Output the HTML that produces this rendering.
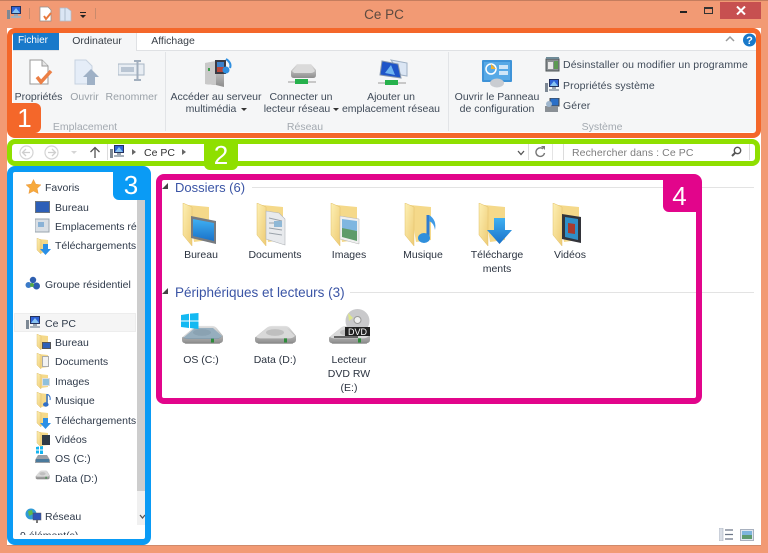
<!DOCTYPE html>
<html lang="fr"><head><meta charset="utf-8"><title>Ce PC</title>
<style>
html,body{margin:0;padding:0;background:#f29a74}
#p{position:relative;width:768px;height:553px;overflow:hidden;background:#f29a74;font-family:"Liberation Sans",sans-serif;font-size:10.5px;color:#333;filter:blur(.3px)}
#p div,#p svg{position:absolute}
.t{white-space:nowrap;line-height:14px;height:14px;margin-top:1px}
.c{transform:translateX(-50%);text-align:center}
.r{color:#3f4a58}
.g{color:#a3a9b0}
.l{color:#9aa1a8}
.s{color:#2f3a4a;font-size:10.5px}
.m{color:#2b3340;font-size:10.5px}
.h{color:#3a54a5;font-size:13.5px;line-height:16px;height:16px}
.f{border-style:solid;box-sizing:border-box;background:transparent}
.b{color:#fff;font-size:26px;line-height:30px;text-align:center}
</style></head><body>
<div id="p">
<svg width="0" height="0" style="position:absolute"><defs>
<linearGradient id="fg" x1="0" y1="0" x2="1" y2="1"><stop offset="0" stop-color="#fdf0b4"/><stop offset="1" stop-color="#eecb74"/></linearGradient>
<linearGradient id="dg" x1="0" y1="0" x2="0" y2="1"><stop offset="0" stop-color="#e3e3e3"/><stop offset="1" stop-color="#8d8d8d"/></linearGradient>
<linearGradient id="bg" x1="0" y1="0" x2="0" y2="1"><stop offset="0" stop-color="#3fb0f2"/><stop offset="1" stop-color="#1a72c9"/></linearGradient>
<symbol id="fold" viewBox="0 0 36 44"><path d="M6 2 27 4V37L12 39Z" fill="#f5d98a"/><path d="M1 0 10 4V43L1 32Z" fill="url(#fg)" stroke="#e2c06a" stroke-width=".5"/></symbol>
<symbol id="sf" viewBox="0 0 14 16"><path d="M3 1 12 2V14L5 15Z" fill="#f5d98a"/><path d="M1 0 5 2V16L1 12Z" fill="url(#fg)" stroke="#d9b65f" stroke-width=".4"/></symbol>
<symbol id="pc" viewBox="0 0 15 14"><rect x="4" y="0" width="10" height="8" fill="#24325e"/><rect x="5" y="1" width="8" height="6" fill="#2f62d6"/><path d="M5 7 9 2l4 5Z" fill="#88c4f2"/><rect x="7" y="8" width="4" height="2" fill="#9aa5b0"/><rect x="4" y="10" width="10" height="2" fill="#a7b0ba"/><rect x="0" y="4" width="3" height="9" fill="#7d8894"/></symbol>
<symbol id="hdd" viewBox="0 0 44 24" preserveAspectRatio="none"><path d="M2 15 14 3Q16 1 20 1H32Q35 1 37 4L43 13V18Q43 22 38 22H6Q2 22 2 18Z" fill="url(#dg)"/><path d="M3 14 15 3H33L42 13Q40 16 36 16H7Q4 16 3 14Z" fill="#d9d9d9"/><ellipse cx="22" cy="9" rx="9" ry="4" fill="#bfbfbf"/><rect x="31" y="16" width="3" height="5" fill="#2e8b3a"/><path d="M5 22H40" stroke="#555" stroke-width="1" opacity=".5"/></symbol>
</defs></svg>

<!-- title bar -->
<div style="left:0;top:0;width:768px;height:1px;background:#c57d5e"></div>
<svg style="left:7px;top:6px" width="15" height="14"><use href="#pc"/></svg>
<div style="left:29px;top:8px;width:1px;height:11px;background:#c98a6c"></div>
<svg style="left:38px;top:6px" width="16" height="16" viewBox="0 0 16 16"><path d="M2 1H10L13 4V15H2Z" fill="#fff" stroke="#8d8d8d" stroke-width=".7"/><path d="M6 10l2 3 5-6" fill="none" stroke="#e8783c" stroke-width="2"/></svg>
<svg style="left:59px;top:7px" width="13" height="15" viewBox="0 0 13 15"><path d="M1 1H8L12 4V14H1Z" fill="#dbe6f4" stroke="#aebccb" stroke-width=".7"/><path d="M6 1V14" stroke="#aebccb"/></svg>
<svg style="left:79px;top:12px" width="8" height="7" viewBox="0 0 8 7"><path d="M1 0H7V1H1ZM1 3H7L4 6Z" fill="#222"/></svg>
<div style="left:95px;top:8px;width:1px;height:11px;background:#c98a6c"></div>
<div class="t c" style="left:384px;top:6px;font-size:13.5px;line-height:16px;height:16px;color:#5c4a40">Ce PC</div>
<div style="left:680px;top:11px;width:7px;height:2px;background:#222"></div>
<div style="left:704px;top:7px;width:9px;height:7px;border:1px solid #333;border-top-width:2px;box-sizing:border-box"></div>
<div style="left:720px;top:2px;width:41px;height:17px;background:#c75050"></div>
<svg style="left:736px;top:6px" width="10" height="9" viewBox="0 0 10 9"><path d="M1 .5 9 8.5M9 .5 1 8.5" stroke="#fff" stroke-width="2"/></svg>

<!-- window -->
<div style="left:7px;top:28px;width:754px;height:517px;background:#fff"></div>
<div style="left:7px;top:545px;width:754px;height:1px;background:#d08a6b"></div>

<!-- ribbon -->
<div style="left:13px;top:51px;width:743px;height:81px;background:#f5f6f7"></div>
<div style="left:13px;top:50px;width:743px;height:1px;background:#dfe1e4"></div>
<div style="left:13px;top:33px;width:46px;height:17px;background:#1979ca"></div>
<div class="t c" style="left:33px;top:33px;color:#fff;font-size:10px">Fichier</div>
<div style="left:59px;top:33px;width:78px;height:18px;background:#f5f6f7;border-right:1px solid #dfe1e4;box-sizing:border-box"></div>
<div class="t c" style="left:97px;top:33px;color:#3a4048">Ordinateur</div>
<div class="t c" style="left:173px;top:33px;color:#3a4048">Affichage</div>
<svg style="left:725px;top:35px" width="10" height="7" viewBox="0 0 10 7"><path d="M1 6 5 2l4 4" fill="none" stroke="#9a9a9a" stroke-width="1.500"/></svg>
<svg style="left:743px;top:33px" width="13" height="14" viewBox="0 0 13 14"><circle cx="6.500" cy="7" r="6.500" fill="#1979ca"/><text x="6.500" y="11" font-size="11" font-weight="bold" text-anchor="middle" fill="#fff" font-family="Liberation Sans">?</text></svg>
<div style="left:165px;top:52px;width:1px;height:79px;background:#e2e4e7"></div>
<div style="left:448px;top:52px;width:1px;height:79px;background:#e2e4e7"></div>

<svg style="left:28px;top:59px" width="25" height="27" viewBox="0 0 25 27"><path d="M2 1H14L20 7V25H2Z" fill="#fff" stroke="#9a9a9a"/><path d="M14 1V7H20" fill="#e6e6e6" stroke="#9a9a9a"/><path d="M9 18l4 5 10-11" fill="none" stroke="#ec7f45" stroke-width="3.500"/></svg>
<svg style="left:73px;top:59px" width="27" height="27" viewBox="0 0 27 27"><path d="M2 1H13L19 7V25H2Z" fill="#e5edf8" stroke="#c7d2e0"/><path d="M18 10l8 8h-4v8h-8v-8h-4Z" fill="#9fb1c6"/></svg>
<svg style="left:118px;top:60px" width="28" height="21" viewBox="0 0 28 21"><rect x="0" y="4" width="26" height="11" fill="#e8edf3" stroke="#a9b6c6"/><rect x="3" y="7" width="13" height="5" fill="#b9c5d3"/><path d="M16 1h7M19.500 1v19M16 20h7" stroke="#a2afbe" stroke-width="2" fill="none"/></svg>
<div class="t c r" style="left:38.500px;top:89px">Propriétés</div>
<div class="t c l" style="left:84.500px;top:89px">Ouvrir</div>
<div class="t c l" style="left:131.500px;top:89px">Renommer</div>
<div class="t c g" style="left:85px;top:119px">Emplacement</div>

<svg style="left:204px;top:57px" width="30" height="31" viewBox="0 0 30 31"><path d="M1 6 12 4 20 6V30L12 28 1 27Z" fill="url(#dg)"/><path d="M1 6 12 4V28L1 27Z" fill="#c9c9c9"/><rect x="4" y="11" width="2" height="3" fill="#3d9e4a"/><rect x="11" y="3" width="11" height="14" fill="#3a3a44"/><rect x="13" y="5" width="7" height="5" fill="#3b7fca"/><rect x="13" y="10" width="7" height="5" fill="#b8463a"/><path d="M22 2q6 4 4 9" stroke="#2f8fe0" stroke-width="2" fill="none"/><circle cx="22" cy="13" r="3.500" fill="#2f8fe0"/></svg>
<svg style="left:287px;top:63px" width="30" height="24" viewBox="0 0 30 24"><path d="M4 8 10 1H24L29 7V12Q29 15 26 15H7Q4 15 4 12Z" fill="url(#dg)"/><path d="M5 8 11 2H24L28 8Q26 10 24 10H7Z" fill="#dadada"/><path d="M1 19H8" stroke="#c8c8c8" stroke-width="2"/><rect x="8" y="16" width="13" height="5" fill="#26b14c"/><path d="M21 19H29" stroke="#c8c8c8" stroke-width="2"/></svg>
<svg style="left:377px;top:59px" width="31" height="28" viewBox="0 0 31 28"><path d="M14 1 30 4V17L24 16Z" fill="#dbe6f4" stroke="#9fb0c4"/><path d="M5 2 21 5 24 19 3 16Z" fill="#1f55c8" stroke="#8696aa"/><path d="M8 14 14 6l4 10Z" fill="#6fb4f0"/><path d="M1 24H8" stroke="#c8c8c8" stroke-width="2"/><rect x="8" y="21" width="13" height="5" fill="#26b14c"/><path d="M21 24H29" stroke="#c8c8c8" stroke-width="2"/></svg>
<div class="t c r" style="left:216px;top:89px">Accéder au serveur</div>
<div class="t c r" style="left:211px;top:101px">multimédia</div>
<div style="left:241px;top:108px;border:3px solid transparent;border-top:3px solid #333;border-bottom:0"></div>
<div class="t c r" style="left:301px;top:89px">Connecter un</div>
<div class="t c r" style="left:297px;top:101px">lecteur réseau</div>
<div style="left:333px;top:108px;border:3px solid transparent;border-top:3px solid #333;border-bottom:0"></div>
<div class="t c r" style="left:391px;top:89px">Ajouter un</div>
<div class="t c r" style="left:391px;top:101px">emplacement réseau</div>
<div class="t c g" style="left:305px;top:119px">Réseau</div>

<svg style="left:482px;top:60px" width="31" height="28" viewBox="0 0 31 28"><rect x="0" y="0" width="30" height="22" rx="1" fill="#3e93d8"/><rect x="2" y="2" width="26" height="18" fill="#57a9e6"/><circle cx="9" cy="9" r="5" fill="none" stroke="#fff" stroke-width="1.500"/><path d="M9 4v5h5" fill="#f2b02e"/><rect x="17" y="5" width="9" height="4" fill="#cfe6f8"/><rect x="17" y="11" width="9" height="4" fill="#cfe6f8"/><ellipse cx="15" cy="23" rx="7" ry="4.500" fill="#c9ccd1"/></svg>
<svg style="left:545px;top:57px" width="15" height="15" viewBox="0 0 15 15"><rect x="1" y="2" width="13" height="12" fill="#8a8f92" stroke="#4f5558"/><rect x="3" y="5" width="5" height="7" fill="#e9e9e9"/><rect x="9" y="4" width="4" height="8" fill="#5c9a52"/><rect x="1" y="0" width="13" height="2" fill="#6f8b98"/></svg>
<svg style="left:545px;top:79px" width="15" height="14"><use href="#pc"/></svg>
<svg style="left:545px;top:98px" width="15" height="15" viewBox="0 0 15 15"><rect x="5" y="0" width="9" height="8" fill="#2b6fc7" stroke="#444"/><rect x="0" y="8" width="13" height="6" fill="#8a9096"/><circle cx="4" cy="6" r="3" fill="#9fb6cd"/></svg>
<div class="t c r" style="left:497px;top:89px">Ouvrir le Panneau</div>
<div class="t c r" style="left:497px;top:101px">de configuration</div>
<div class="t r" style="left:563px;top:57px;letter-spacing:.11px">Désinstaller ou modifier un programme</div>
<div class="t r" style="left:563px;top:78px;letter-spacing:.11px">Propriétés système</div>
<div class="t r" style="left:563px;top:98px;letter-spacing:.11px">Gérer</div>
<div class="t c g" style="left:602px;top:119px">Système</div>

<!-- nav row -->
<svg style="left:17px;top:145px" width="18" height="15" viewBox="0 0 18 15"><circle cx="9.500" cy="7.500" r="6.500" fill="none" stroke="#d4d4d4" stroke-width="1.200"/><path d="M13 7.500H6M9 4 5.500 7.500 9 11" fill="none" stroke="#cfcfcf" stroke-width="1.300"/></svg>
<svg style="left:43px;top:145px" width="18" height="15" viewBox="0 0 18 15"><circle cx="8.500" cy="7.500" r="6.500" fill="none" stroke="#d4d4d4" stroke-width="1.200"/><path d="M5 7.500H12M9 4l3.500 3.500L9 11" fill="none" stroke="#cfcfcf" stroke-width="1.300"/></svg>
<div style="left:71px;top:151px;border:3px solid transparent;border-top:3px solid #d5d5d5;border-bottom:0"></div>
<svg style="left:89px;top:146px" width="12" height="12" viewBox="0 0 12 12"><path d="M6 12V2M1.500 6 6 1.500 10.500 6" fill="none" stroke="#555" stroke-width="1.300"/></svg>
<div style="left:107px;top:144px;width:1px;height:16px;background:#dcdcdc"></div>
<svg style="left:110px;top:145px" width="15" height="14"><use href="#pc"/></svg>
<div style="left:132px;top:149px;border:3.500px solid transparent;border-left:4px solid #666;border-right:0"></div>
<div class="t" style="left:144px;top:145px;color:#333">Ce PC</div>
<div style="left:182px;top:149px;border:3.500px solid transparent;border-left:4px solid #666;border-right:0"></div>
<svg style="left:517px;top:150px" width="8" height="6" viewBox="0 0 8 6"><path d="M1 1 4 4.500 7 1" fill="none" stroke="#555" stroke-width="1.300"/></svg>
<div style="left:528px;top:144px;width:1px;height:16px;background:#dcdcdc"></div>
<svg style="left:535px;top:146px" width="11" height="12" viewBox="0 0 11 12"><path d="M9.500 7A4.300 4.300 0 1 1 8 2.800" fill="none" stroke="#777" stroke-width="1.400"/><path d="M6 0H10V4Z" fill="#777"/></svg>
<div style="left:552px;top:144px;width:1px;height:16px;background:#e4e4e4"></div>
<div style="left:563px;top:144px;width:1px;height:16px;background:#dcdcdc"></div>
<div style="left:749px;top:144px;width:1px;height:16px;background:#dcdcdc"></div>
<div class="t" style="left:572px;top:145px;color:#7d7d7d;letter-spacing:.08px">Rechercher dans : Ce PC</div>
<svg style="left:731px;top:146px" width="11" height="11" viewBox="0 0 11 11"><circle cx="6.500" cy="4.500" r="3.200" fill="none" stroke="#555" stroke-width="1.400"/><path d="M4 7 1 10" stroke="#555" stroke-width="2"/></svg>

<!-- sidebar -->
<div style="left:13px;top:172px;width:124px;height:363px;overflow:hidden">
  <div style="left:1px;top:141px;width:122px;height:19px;background:#f5f5f5;border:1px solid #ededed;box-sizing:border-box"></div>
  <svg style="left:13px;top:7px" width="15" height="15" viewBox="0 0 16 15"><path d="M8 0 10.400 5 16 5.700 11.900 9.500 13 15 8 12.300 3 15 4.100 9.500 0 5.700 5.600 5Z" fill="#f7a93c" stroke="#e08a2e" stroke-width=".4"/></svg>
  <div class="t s" style="left:32px;top:8px">Favoris</div>
  <div style="left:22px;top:29px;width:15px;height:12px;background:#2d5fb8;border:1px solid #6a7480;box-sizing:border-box"></div>
  <div class="t s" style="left:42px;top:28px">Bureau</div>
  <svg style="left:22px;top:46px" width="15" height="15" viewBox="0 0 15 15"><rect x="0" y="1" width="14" height="13" fill="#d9dfe5" stroke="#9aa4ae"/><rect x="3" y="4" width="6" height="5" fill="#8ab2d6"/></svg>
  <div class="t s" style="left:42px;top:47px">Emplacements réseau</div>
  <svg style="left:23px;top:66px" width="14" height="16"><use href="#sf"/></svg>
  <svg style="left:27px;top:72px" width="11" height="11" viewBox="0 0 11 11"><path d="M3 0H8V5H11L5.500 11 0 5H3Z" fill="#2a8fe6"/></svg>
  <div class="t s" style="left:42px;top:66px">Téléchargements</div>
  <svg style="left:12px;top:104px" width="16" height="16" viewBox="0 0 16 16"><circle cx="8" cy="4" r="3.200" fill="#2e5fb0"/><circle cx="3.500" cy="9" r="3" fill="#3b7bc8"/><circle cx="11.500" cy="10" r="3.500" fill="#2e5fb0"/><circle cx="7" cy="9" r="2" fill="#55a84a"/></svg>
  <div class="t s" style="left:32px;top:105px">Groupe résidentiel</div>
  <svg style="left:13px;top:144px" width="15" height="14"><use href="#pc"/></svg>
  <div class="t s" style="left:32px;top:144px">Ce PC</div>

  <svg style="left:23px;top:162px" width="14" height="16"><use href="#sf"/></svg><div style="left:29px;top:170px;width:9px;height:7px;background:#2d5fb8;border:1px solid #555;box-sizing:border-box"></div>
  <div class="t s" style="left:42px;top:163px">Bureau</div>
  <svg style="left:23px;top:181px" width="14" height="16"><use href="#sf"/></svg><div style="left:29px;top:184px;width:7px;height:11px;background:#f2f2f2;border:1px solid #aaa;box-sizing:border-box"></div>
  <div class="t s" style="left:42px;top:182px">Documents</div>
  <svg style="left:23px;top:201px" width="14" height="16"><use href="#sf"/></svg><div style="left:29px;top:206px;width:8px;height:8px;background:#8fc0dc;border:1px solid #ddd;box-sizing:border-box"></div>
  <div class="t s" style="left:42px;top:202px">Images</div>
  <svg style="left:23px;top:220px" width="14" height="16"><use href="#sf"/></svg><svg style="left:30px;top:222px" width="8" height="13" viewBox="0 0 8 13"><path d="M4 0V10" stroke="#2f6fc8" stroke-width="1.500"/><ellipse cx="2.800" cy="10.500" rx="2.800" ry="2.200" fill="#2f6fc8"/><path d="M4 0q4 2 3 6" stroke="#2f6fc8" fill="none"/></svg>
  <div class="t s" style="left:42px;top:221px">Musique</div>
  <svg style="left:23px;top:239px" width="14" height="16"><use href="#sf"/></svg><svg style="left:27px;top:246px" width="11" height="11" viewBox="0 0 11 11"><path d="M3 0H8V5H11L5.500 11 0 5H3Z" fill="#2a8fe6"/></svg>
  <div class="t s" style="left:42px;top:241px">Téléchargements</div>
  <svg style="left:23px;top:259px" width="14" height="16"><use href="#sf"/></svg><div style="left:29px;top:263px;width:8px;height:10px;background:#2f3a46"></div>
  <div class="t s" style="left:42px;top:260px">Vidéos</div>
  <svg style="left:22px;top:274px" width="15" height="18" viewBox="0 0 15 18"><path d="M1 1 4 .5V3.500H1ZM5 .5 8 0V3.500H5ZM1 4.500H4V7.500H1ZM5 4.500H8V8H5Z" fill="#14b4f0"/><path d="M0 14 3 9H12L15 14V17H0Z" fill="#9a9fa5"/><rect x="1" y="13" width="13" height="3" fill="#4a7a9c"/></svg>
  <div class="t s" style="left:42px;top:279px">OS (C:)</div>
  <svg style="left:22px;top:298px" width="15" height="10"><use href="#hdd"/></svg>
  <div class="t s" style="left:42px;top:299px">Data (D:)</div>
  <svg style="left:12px;top:336px" width="17" height="16" viewBox="0 0 17 16"><circle cx="6" cy="6" r="5.500" fill="#2f9ad6"/><path d="M3 3 7 2 8 6 4 8Z" fill="#5eb84e"/><rect x="8" y="5" width="8" height="7" fill="#2f55b8" stroke="#555" stroke-width=".5"/><rect x="11" y="12" width="2" height="3" fill="#777"/></svg>
  <div class="t s" style="left:32px;top:337px">Réseau</div>
  <div class="t s" style="left:7px;top:356px">9 élément(s)</div>
</div>
<div style="left:137px;top:172px;width:8px;height:319px;background:#cdcdcd"></div>
<div style="left:137px;top:491px;width:8px;height:34px;background:#f0f0f0"></div>
<svg style="left:139px;top:514px" width="7" height="6" viewBox="0 0 7 6"><path d="M1 1 3.500 4 6 1" fill="none" stroke="#555" stroke-width="1.300"/></svg>

<!-- main: Dossiers -->
<div style="left:162px;top:183px;border:3px solid transparent;border-right:3px solid #444;border-bottom:3px solid #444;width:0;height:0"></div>
<div class="t h" style="left:175px;top:179px;font-size:13px">Dossiers (6)</div>
<div style="left:252px;top:187px;width:502px;height:1px;background:#e3e3e3"></div>

<svg style="left:182px;top:203px" width="36" height="44"><use href="#fold"/><path d="M9 13 34 18V41L9 35Z" fill="#777b80"/><path d="M11 16 32 20V38L11 33Z" fill="url(#bg)"/></svg>
<svg style="left:256px;top:203px" width="36" height="44"><use href="#fold"/><path d="M10 8 23 10 29 16V42L10 36Z" fill="#e8eaed" stroke="#b0b4b8" stroke-width=".6"/><path d="M13 15 26 18M13 20h13M13 25l13 2M13 30l13 2" stroke="#9aa2aa"/><rect x="18" y="18" width="8" height="6" fill="#8fb8d6"/></svg>
<svg style="left:330px;top:203px" width="36" height="44"><use href="#fold"/><path d="M10 13 29 16V41L10 36Z" fill="#f0f0f0" stroke="#b5b5b5" stroke-width=".5"/><path d="M12 16 27 18V28L12 26Z" fill="#7fb6e0"/><path d="M12 25 27 28V38L12 34Z" fill="#5f9c6a"/></svg>
<svg style="left:404px;top:203px" width="36" height="44"><use href="#fold"/><path d="M24 12V34" stroke="#2f7cd0" stroke-width="3"/><ellipse cx="20" cy="35" rx="6" ry="5" fill="#2f8fdc"/><path d="M25 12q8 5 6 15-1-7-6-9Z" fill="#3f9ae4"/></svg>
<svg style="left:478px;top:203px" width="36" height="44"><use href="#fold"/><path d="M16 15H27V27H34L21.500 41 9 27H16Z" fill="url(#bg)"/></svg>
<svg style="left:552px;top:203px" width="36" height="44"><use href="#fold"/><path d="M10 11 29 14V40L10 36Z" fill="#33343a"/><path d="M13 14 26 16V37L13 34Z" fill="#2f8fc8"/><path d="M16 20 23 21V31L16 30Z" fill="#a83a2e"/></svg>

<div class="t c m" style="left:201px;top:247px">Bureau</div>
<div class="t c m" style="left:275px;top:247px">Documents</div>
<div class="t c m" style="left:349px;top:247px">Images</div>
<div class="t c m" style="left:423px;top:247px">Musique</div>
<div class="t c m" style="left:497px;top:247px">Télécharge</div>
<div class="t c m" style="left:497px;top:261px">ments</div>
<div class="t c m" style="left:570px;top:247px">Vidéos</div>

<!-- main: Périphériques -->
<div style="left:162px;top:288px;border:3px solid transparent;border-right:3px solid #444;border-bottom:3px solid #444;width:0;height:0"></div>
<div class="t h" style="left:175px;top:284px">Périphériques et lecteurs (3)</div>
<div style="left:350px;top:292px;width:404px;height:1px;background:#e3e3e3"></div>

<svg style="left:180px;top:325px" width="44" height="20"><use href="#hdd"/><path d="M3 13 15 3H33L42 11Q40 14 36 14H7Z" fill="#5f8aa8" opacity=".55"/></svg>
<svg style="left:181px;top:313px" width="18" height="16" viewBox="0 0 18 16"><path d="M0 2 8 .8V7.500H0ZM9 .6 17.500 0V7.500H9ZM0 8.500H8V15L0 14ZM9 8.500H17.500V16L9 15Z" fill="#14b9f2"/></svg>
<svg style="left:253px;top:325px" width="44" height="20"><use href="#hdd"/></svg>
<svg style="left:327px;top:325px" width="44" height="20"><use href="#hdd"/><rect x="7" y="11" width="24" height="2" fill="#666"/></svg>
<svg style="left:345px;top:309px" width="25" height="27" viewBox="0 0 25 27"><circle cx="12.500" cy="12" r="12" fill="#c9c9cb"/><circle cx="12.500" cy="11" r="3.500" fill="#f0f0f0" stroke="#999"/><path d="M3 4 8 9 4 12Z" fill="#dfe88a"/><rect x="0" y="18" width="25" height="9" fill="#222"/><text x="12.500" y="26" font-size="9" fill="#fff" text-anchor="middle" font-family="Liberation Sans">DVD</text></svg>
<div class="t c m" style="left:201px;top:352px">OS (C:)</div>
<div class="t c m" style="left:275px;top:352px">Data (D:)</div>
<div class="t c m" style="left:349px;top:352px">Lecteur</div>
<div class="t c m" style="left:349px;top:366px">DVD RW</div>
<div class="t c m" style="left:349px;top:380px">(E:)</div>

<!-- view icons -->
<svg style="left:719px;top:528px" width="15" height="13" viewBox="0 0 15 13"><rect x="0" y="0" width="4" height="13" fill="#d9dee6" stroke="#a8b1bf" stroke-width=".6"/><path d="M6 2h8M6 6.500h8M6 11h8" stroke="#6c7687" stroke-width="1.300"/></svg>
<svg style="left:740px;top:529px" width="14" height="12" viewBox="0 0 14 12"><rect x=".5" y=".5" width="13" height="11" fill="#dfe6f0" stroke="#a8b1bf"/><rect x="2" y="2" width="10" height="4" fill="#7db4dc"/><rect x="2" y="6" width="10" height="4" fill="#5d9a6e"/></svg>

<!-- callout frames -->
<div class="f" style="left:7px;top:28px;width:754px;height:110px;border-width:5.500px;border-color:#f4672a;border-radius:8px"></div>
<div class="f" style="left:7px;top:139px;width:753px;height:27px;border-width:5px;border-color:#8fdf00;border-radius:8px"></div>
<div class="f" style="left:7px;top:166px;width:144px;height:379px;border-width:6px;border-color:#0a9bf5;border-radius:8px"></div>
<div class="f" style="left:156px;top:174px;width:546px;height:230px;border-width:6px;border-color:#e2058b;border-radius:8px"></div>

<div class="b" style="left:8px;top:103px;width:33px;height:30px;background:#f4672a;border-radius:0 6px 6px 0">1</div>
<div class="b" style="left:204px;top:139px;width:34px;height:31px;background:#8fdf00;border-radius:6px;line-height:32px">2</div>
<div class="b" style="left:113px;top:170px;width:32px;height:30px;background:#0a9bf5;border-radius:0 0 0 6px;padding-left:4px;box-sizing:border-box">3</div>
<div class="b" style="left:663px;top:180px;width:33px;height:32px;background:#e2058b;border-radius:0 0 0 6px;line-height:33px">4</div>
</div>
</body></html>
